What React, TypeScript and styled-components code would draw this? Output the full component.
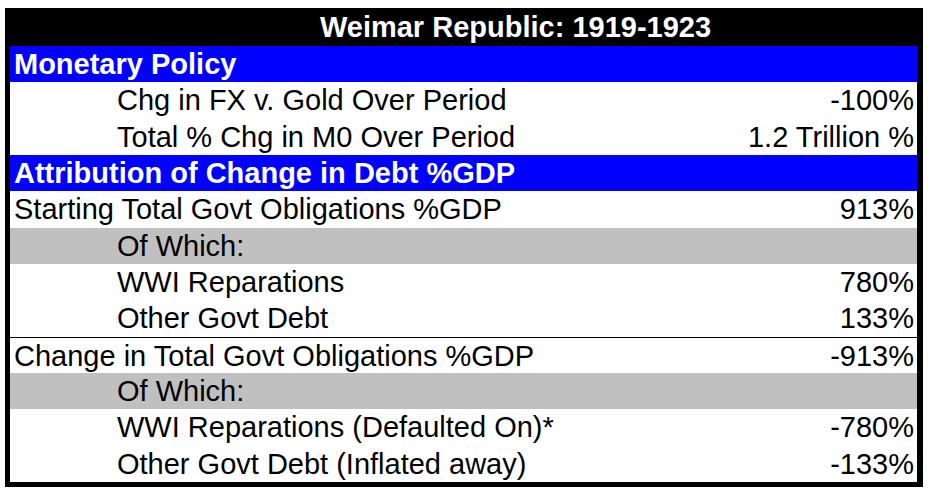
import { createGlobalStyle, styled } from "styled-components"

const GlobalStyle = createGlobalStyle`
  html, body {
    margin: 0;
    padding: 0;
    background: #fff;
  }
`

const rowHeight = 436 / 12

type Tone = "head" | "plain" | "shade"

const tones: Record<Tone, { bg: string; color: string; weight: number }> = {
  head: { bg: "#0000ff", color: "#fff", weight: 700 },
  plain: { bg: "#fff", color: "#000", weight: 400 },
  shade: { bg: "#c0c0c0", color: "#000", weight: 400 },
}

const Frame = styled.div`
  margin: 8px 0 0 5px;
  width: 918px;
  box-sizing: border-box;
  border: solid #000;
  border-width: 0 6px 5px 5px;
  font-family: "Liberation Sans", Arial, sans-serif;
  font-size: 29px;
`

const TitleBar = styled.div`
  display: grid;
  grid-template-columns: 103px 1fr;
  height: 38px;
  line-height: 38px;
  padding: 0 3px 0 4px;
  background: #000;
  color: #fff;
  font-weight: 700;
`

const TitleText = styled.div`
  grid-column: 2;
  text-align: center;
  white-space: nowrap;
`

const Row = styled.div<{ $tone: Tone; $rule?: boolean }>`
  display: grid;
  grid-template-columns: 103px 1fr auto;
  box-sizing: border-box;
  height: ${rowHeight}px;
  line-height: ${rowHeight}px;
  padding: 0 3px 0 4px;
  background: ${props => tones[props.$tone].bg};
  color: ${props => tones[props.$tone].color};
  font-weight: ${props => tones[props.$tone].weight};
  border-top: ${props => (props.$rule ? "1px solid #000" : "0")};
`

const Label = styled.span<{ $indent?: boolean }>`
  grid-column: ${props => (props.$indent ? "2" : "1 / 3")};
  white-space: nowrap;
`

const Value = styled.span`
  grid-column: 3;
  text-align: right;
  white-space: nowrap;
`

interface Line {
  label: string
  value?: string
  tone: Tone
  indent?: boolean
  rule?: boolean
}

const lines: Line[] = [
  { label: "Monetary Policy", tone: "head" },
  { label: "Chg in FX v. Gold Over Period", value: "-100%", tone: "plain", indent: true },
  { label: "Total % Chg in M0 Over Period", value: "1.2 Trillion %", tone: "plain", indent: true },
  { label: "Attribution of Change in Debt %GDP", tone: "head" },
  { label: "Starting Total Govt Obligations %GDP", value: "913%", tone: "plain" },
  { label: "Of Which:", tone: "shade", indent: true },
  { label: "WWI Reparations", value: "780%", tone: "plain", indent: true },
  { label: "Other Govt Debt", value: "133%", tone: "plain", indent: true },
  { label: "Change in Total Govt Obligations %GDP", value: "-913%", tone: "plain", rule: true },
  { label: "Of Which:", tone: "shade", indent: true },
  { label: "WWI Reparations (Defaulted On)*", value: "-780%", tone: "plain", indent: true },
  { label: "Other Govt Debt (Inflated away)", value: "-133%", tone: "plain", indent: true },
]

export default function App() {
  return (
    <>
      <GlobalStyle />
      <Frame>
        <TitleBar>
          <TitleText>Weimar Republic: 1919-1923</TitleText>
        </TitleBar>
        {lines.map((line, index) => (
          <Row key={index} $tone={line.tone} $rule={line.rule}>
            <Label $indent={line.indent}>{line.label}</Label>
            {line.value && <Value>{line.value}</Value>}
          </Row>
        ))}
      </Frame>
    </>
  )
}
